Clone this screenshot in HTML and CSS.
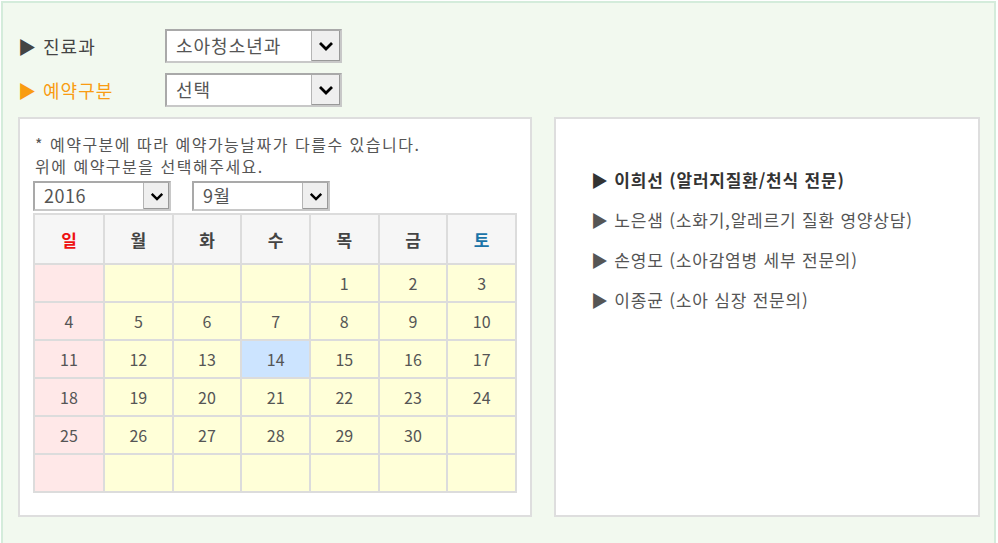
FILE: index.html
```html
<!DOCTYPE html>
<html lang="ko">
<head>
  <meta charset="UTF-8" />
  <title>진료예약</title>
  <link rel="stylesheet" href="styles.css">
</head>
<body>
  <div class="wrap">
    <div class="field">
      <span class="label">▶ 진료과</span>
      <div class="select big">
        <span class="val">소아청소년과</span>
        <span class="arrow"><svg width="16" height="10" viewBox="0 0 16 10"><path d="M2 2 L8 8 L14 2" fill="none" stroke="#000" stroke-width="2.8"/></svg></span>
      </div>
    </div>
    <div class="field">
      <span class="label on">▶ 예약구분</span>
      <div class="select big">
        <span class="val">선택</span>
        <span class="arrow"><svg width="16" height="10" viewBox="0 0 16 10"><path d="M2 2 L8 8 L14 2" fill="none" stroke="#000" stroke-width="2.8"/></svg></span>
      </div>
    </div>

    <div class="panels">
      <div class="panel cal-box">
        <p class="note">* 예약구분에 따라 예약가능날짜가 다를수 있습니다.<br>위에 예약구분을 선택해주세요.</p>
        <div class="ym">
          <div class="select small">
            <span class="val">2016</span>
            <span class="arrow"><svg width="14" height="9" viewBox="0 0 16 10"><path d="M2 2 L8 8 L14 2" fill="none" stroke="#000" stroke-width="2.8"/></svg></span>
          </div>
          <div class="select small">
            <span class="val">9월</span>
            <span class="arrow"><svg width="14" height="9" viewBox="0 0 16 10"><path d="M2 2 L8 8 L14 2" fill="none" stroke="#000" stroke-width="2.8"/></svg></span>
          </div>
        </div>
        <table class="cal" id="cal">
          <thead>
            <tr>
              <th class="sun">일</th><th>월</th><th>화</th><th>수</th><th>목</th><th>금</th><th class="sat">토</th>
            </tr>
          </thead>
          <tbody></tbody>
        </table>
      </div>

      <div class="panel doc-box">
        <ul class="docs">
          <li class="strong">▶ 이희선 (알러지질환/천식 전문)</li>
          <li>▶ 노은샘 (소화기,알레르기 질환 영양상담)</li>
          <li>▶ 손영모 (소아감염병 세부 전문의)</li>
          <li>▶ 이종균 (소아 심장 전문의)</li>
        </ul>
      </div>
    </div>
  </div>

  <script>
    // 2016년 9월 : 1일이 목요일
    const body = document.querySelector('#cal tbody');
    let day = 1 - 4;
    for (let r = 0; r < 6; r++) {
      const tr = document.createElement('tr');
      for (let c = 0; c < 7; c++) {
        const td = document.createElement('td');
        if (c === 0) td.className = 'sun';
        if (day >= 1 && day <= 30) td.textContent = day;
        if (day === 14) td.className = 'today';
        tr.appendChild(td);
        day++;
      }
      body.appendChild(tr);
    }
  </script>
</body>
</html>
```

FILE: styles.css
```css
body {
  margin: 0;
  font-family: 'Noto Sans CJK KR', 'Noto Sans', sans-serif;
  color: #444;
  background: #fff;
}
.wrap {
  margin: 1px 2px 0 1px;
  border: 2px solid #d4ecdb;
  border-bottom: none;
  background: #f2f9ef;
  height: 560px;
  padding: 26px 0 0 15px;
  box-sizing: border-box;
}
.field {
  display: flex;
  align-items: center;
  margin-bottom: 10px;
}
.label {
  width: 147px;
  font-size: 18px;
  letter-spacing: 1px;
  color: #444;
}
.label.on {
  color: #f99c12;
}
.select {
  display: flex;
  background: #fff;
  border: 2px solid #a9a9a9;
  border-right-color: #c8c8c8;
  border-bottom-color: #c8c8c8;
  box-sizing: border-box;
}
.select .val {
  flex: 1;
  color: #555;
  padding-left: 9px;
}
.select .arrow {
  display: flex;
  align-items: center;
  justify-content: center;
  background: #efefef;
  border-left: 1px solid #b5b5b5;
  box-shadow: inset -1px -1px 0 #999;
}
.select.big {
  width: 177px;
  height: 34px;
}
.select.big .val {
  font-size: 18px;
  letter-spacing: 1px;
  line-height: 29px;
}
.select.big .arrow {
  width: 28px;
}
.select.small {
  width: 138px;
  height: 30px;
}
.select.small .val {
  font-size: 18px;
  letter-spacing: 0.5px;
  line-height: 25px;
}
.select.small .arrow {
  width: 25px;
}
.panels {
  display: flex;
  gap: 22px;
}
.panel {
  background: #fff;
  border: 2px solid #dedede;
  height: 400px;
  box-sizing: border-box;
}
.cal-box {
  width: 514px;
  padding: 14px 0 0 13px;
}
.note {
  margin: 0 0 4px 2px;
  font-size: 16px;
  letter-spacing: 1.5px;
  line-height: 22px;
  color: #555;
}
.ym {
  display: flex;
  gap: 21px;
  margin-bottom: 2px;
}
.cal {
  border-collapse: collapse;
  width: 484px;
  border: 2px solid #dcdcdc;
}
.cal th, .cal td {
  border: 2px solid #dcdcdc;
  text-align: center;
  padding: 0;
}
.cal th {
  height: 48px;
  background: #f6f6f6;
  font-size: 17px;
  font-weight: bold;
  color: #444;
}
.cal th.sun {
  color: #ee1111;
}
.cal th.sat {
  color: #1b74a8;
}
.cal td {
  height: 36px;
  background: #ffffd8;
  font-size: 16px;
  color: #555;
}
.cal td.sun {
  width: 68px;
  background: #ffe8e8;
}
.cal td.today {
  background: #cce4ff;
}
.doc-box {
  width: 426px;
  padding: 41px 0 0 35px;
}
.docs {
  list-style: none;
  margin: 0;
  padding: 0;
}
.docs li {
  font-size: 17px;
  letter-spacing: 0.8px;
  line-height: 40px;
  color: #555;
}
.docs li.strong {
  font-weight: bold;
  color: #333;
}
```
